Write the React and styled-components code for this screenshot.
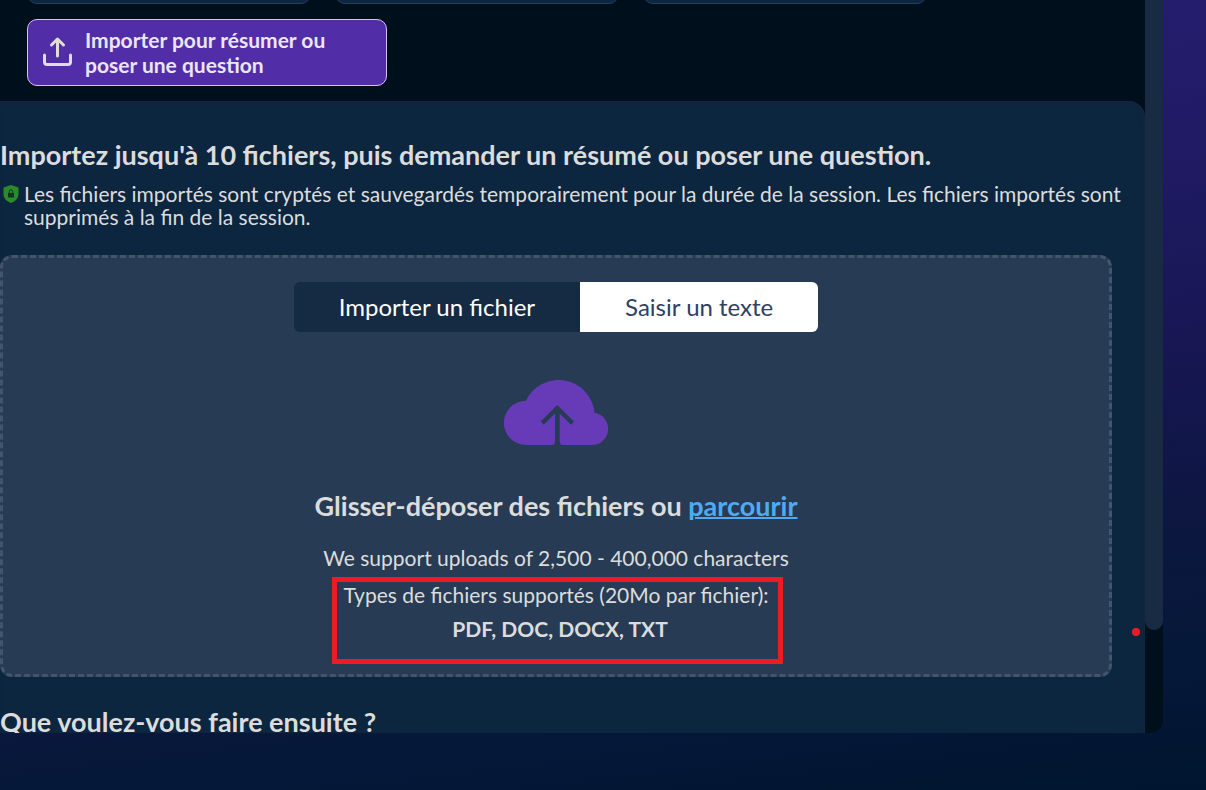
import React from "react";
import styled, { createGlobalStyle } from "styled-components";

const GlobalStyle = createGlobalStyle`
  * { box-sizing: border-box; }
  body {
    margin: 0;
    font-family: Lato, "Liberation Sans", sans-serif;
    color: #dcdcdc;
    background: #00142e;
  }
  h2, p { margin: 0; }
`;

const Page = styled.div`
  min-height: 100vh;
  padding: 0 43px 57px 0;
  background: linear-gradient(173deg, #251c70 0%, #231c6b 22%, #1b1859 45%, #151650 56%, #0c173f 72%, #06183a 84%, #00152f 100%);
`;

const Window = styled.main`
  position: relative;
  display: flex;
  height: calc(100vh - 57px);
  overflow: hidden;
  background: #000f1c;
  border-radius: 0 0 14px 0;
`;

const Content = styled.div`
  flex: 1;
  min-width: 0;
`;

const ScrollTrack = styled.div`
  width: 18px;
  background: #000f1c;
`;

const ScrollThumb = styled.div`
  height: 86%;
  background: #192a43;
  border-radius: 0 0 9px 9px;
`;

const Actions = styled.nav`
  display: grid;
  grid-template-columns: repeat(3, 284px);
  gap: 15px 24px;
  padding: 0 27px 15px;
`;

const ActionCard = styled.div`
  height: 40px;
  margin-top: -36px;
  background: #0c2640;
  border: 1px solid #263d60;
  border-radius: 10px;
`;

const ImportButton = styled.button`
  grid-column: 1 / 3;
  width: 360px;
  height: 67px;
  display: flex;
  align-items: center;
  gap: 12px;
  padding: 0 14px 2px;
  border: 1px solid #d6c1fb;
  border-radius: 10px;
  background: #512da8;
  color: #ebe6f5;
  font: 700 21px/25px Lato, sans-serif;
  text-align: left;
`;

const Panel = styled.section`
  height: 100%;
  padding: 37px 33px 0 0;
  background: #0c2640;
  border-radius: 0 16px 0 0;
  box-shadow: inset -2px 3px 4px #11263c;
`;

const Heading = styled.h2`
  font-size: 27px;
  line-height: 34px;
  font-weight: 700;
`;

const Notice = styled.div`
  display: flex;
  gap: 5px;
  margin: 10px -16px 0 0;
  padding-left: 3px;
  font-size: 21px;
  line-height: 23px;
  svg { flex: none; margin-top: 3px; }
`;

const DropZone = styled.div`
  display: flex;
  flex-direction: column;
  align-items: center;
  height: 422px;
  margin: 27px 0 28px;
  padding-top: 24px;
  background: #273c54;
  border: 3px dashed #43556b;
  border-radius: 12px;
`;

const Tabs = styled.div`
  display: flex;
  overflow: hidden;
  border-radius: 6px;
`;

const Tab = styled.button`
  height: 50px;
  padding: 0 45px;
  border: 0;
  background: ${(p) => (p.$active ? "#152a43" : "#fff")};
  color: ${(p) => (p.$active ? "#fff" : "#2f4163")};
  font: 400 24px/30px Lato, sans-serif;
`;

const Cloud = styled.svg`
  margin: 48px 0 44px;
`;

const Browse = styled.a`
  color: #4dabf5;
  text-decoration: underline;
  text-decoration-thickness: 2px;
`;

const Hint = styled.p`
  margin-top: 21px;
  font-size: 21px;
  line-height: 28px;
`;

const FileTypes = styled.div`
  position: relative;
  margin-top: 6px;
  font-size: 21px;
  line-height: 34px;
  text-align: center;
  strong { padding-left: 8px; }
`;

const Highlight = styled.div`
  position: absolute;
  inset: -1px -14px -18px -11px;
  border: 5px solid #ed1c24;
`;

const RedDot = styled.div`
  position: absolute;
  right: 23px;
  bottom: 97px;
  width: 8px;
  height: 8px;
  border-radius: 50%;
  background: #ed1c24;
`;

function UploadIcon() {
  return (
    <svg width="31" height="31" viewBox="0 0 31 31" fill="none" stroke="#e2ddd8" strokeWidth="3" strokeLinecap="round" strokeLinejoin="round" aria-hidden="true">
      <path d="M15.5 20V3.500M9.500 9l6-6 6 6" />
      <path d="M2.500 19v7q0 2.500 2.500 2.500h21q2.500 0 2.500-2.500V19" />
    </svg>
  );
}

function ShieldIcon() {
  return (
    <svg width="16" height="18" viewBox="0 0 16 18" aria-hidden="true">
      <path d="M8 0l7.500 2.500v6.500c0 4-3 7.500-7.500 9C3.500 16.500.5 13 .5 9V2.500z" fill="#2a8b2d" />
      <rect x="5" y="8" width="6" height="4.500" rx=".5" fill="#123423" />
      <path d="M6.300 8V6.500a1.700 1.700 0 0 1 3.400 0V8" fill="none" stroke="#123423" />
    </svg>
  );
}

export default function App() {
  return (
    <>
      <GlobalStyle />
      <Page>
        <Window>
          <Content>
            <Actions>
              <ActionCard />
              <ActionCard />
              <ActionCard />
              <ImportButton type="button">
                <UploadIcon />
                <span>
                  Importer pour résumer ou
                  <br />
                  poser une question
                </span>
              </ImportButton>
            </Actions>
            <Panel>
              <Heading>Importez jusqu'à 10 fichiers, puis demander un résumé ou poser une question.</Heading>
              <Notice>
                <ShieldIcon />
                <p>
                  Les fichiers importés sont cryptés et sauvegardés temporairement pour la durée de la session. Les
                  fichiers importés sont supprimés à la fin de la session.
                </p>
              </Notice>
              <DropZone>
                <Tabs>
                  <Tab type="button" $active>Importer un fichier</Tab>
                  <Tab type="button">Saisir un texte</Tab>
                </Tabs>
                <Cloud width="104" height="65" viewBox="0 0 104 65" aria-hidden="true">
                  <path
                    fill="#673ab7"
                    d="M22 65A22 22 0 0 1 22 20.800A36 36 0 0 1 90.500 32.800A16.200 16.200 0 0 1 88 65H59Q55.700 65 55.700 61.500V33.500L67 44.700L70 41.500L53.300 25L36.700 41.500L39.700 44.700L51 33.500V61.500Q51 65 47.700 65Z"
                  />
                </Cloud>
                <Heading>
                  Glisser-déposer des fichiers ou <Browse href="#parcourir">parcourir</Browse>
                </Heading>
                <Hint>We support uploads of 2,500 - 400,000 characters</Hint>
                <FileTypes>
                  Types de fichiers supportés (20Mo par fichier):
                  <br />
                  <strong>PDF, DOC, DOCX, TXT</strong>
                  <Highlight />
                </FileTypes>
              </DropZone>
              <Heading>Que voulez-vous faire ensuite ?</Heading>
            </Panel>
          </Content>
          <ScrollTrack>
            <ScrollThumb />
          </ScrollTrack>
          <RedDot />
        </Window>
      </Page>
    </>
  );
}
